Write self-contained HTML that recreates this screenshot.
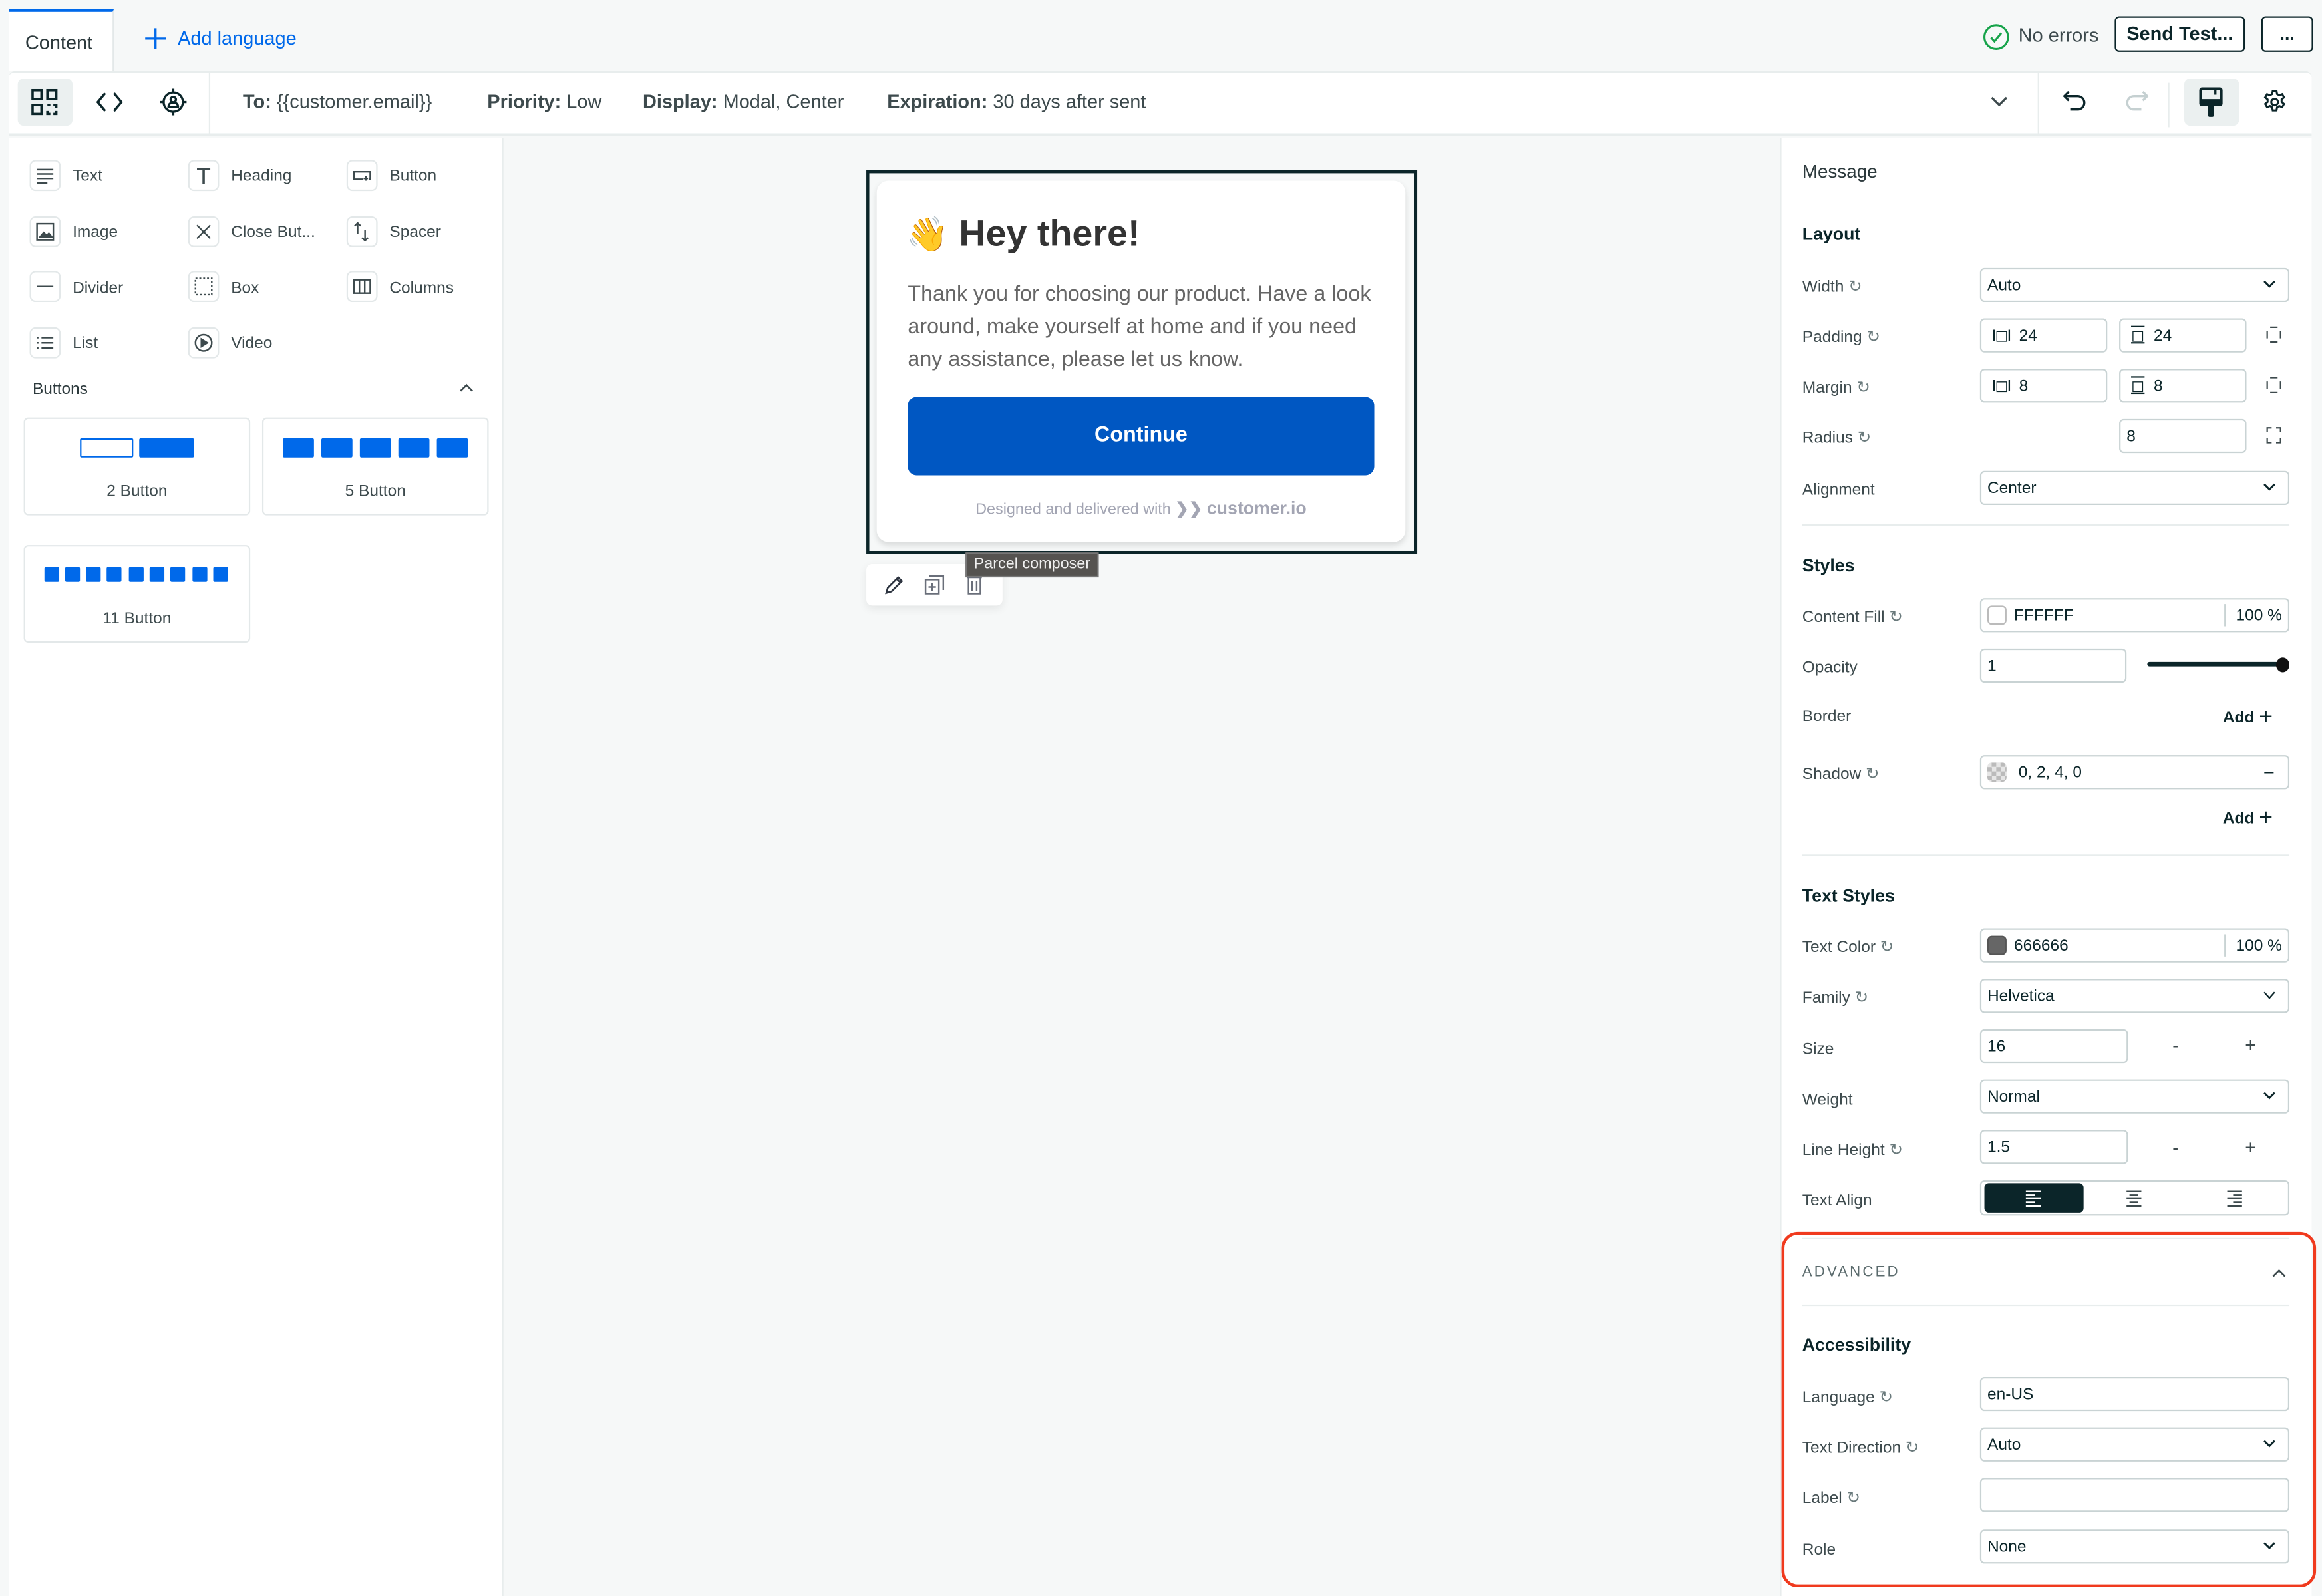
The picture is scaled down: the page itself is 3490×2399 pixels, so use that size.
<!DOCTYPE html>
<html><head><meta charset="utf-8">
<style>
*{box-sizing:border-box;margin:0;padding:0}
html,body{width:3490px;height:2398px;overflow:hidden;background:#f6f8f8}
#w{position:absolute;left:0;top:0;width:1568px;height:1078px;transform:scale(2.22577);transform-origin:0 0;font-family:"Liberation Sans",sans-serif;color:#3d4a4d;background:#f6f8f8}
.a{position:absolute}
.t{position:absolute;white-space:nowrap;line-height:16px;height:16px}
.ib{position:absolute;width:21px;height:21px;border:1px solid #e3e8e9;border-radius:4px;background:#fff}
.ib svg{position:absolute;left:2px;top:2px}
.pl{position:absolute;white-space:nowrap;line-height:16px;height:16px;font-size:11px;margin-top:1px}
.lbl{position:absolute;font-size:11px;color:#3d4a4d;white-space:nowrap;line-height:16px;margin-top:1px}
.inp{position:absolute;border:1px solid #c9d3d4;border-radius:3px;background:#fff;height:23px;font-size:11px;color:#0b2529;line-height:22px;padding-left:4px;white-space:nowrap}
.chev{position:absolute;right:8px;top:7px}
.sec{position:absolute;font-size:12.5px;font-weight:bold;color:#0b2529;line-height:16px}
.card{position:absolute;border:1px solid #e3e8e9;border-radius:3px;background:#fff}
.bb{position:absolute;background:#0069ea;border-radius:1px}
</style></head><body><div id="w">
<!-- top bar -->
<div class="a" style="left:6px;top:6px;width:71px;height:42px;background:#fff;border-top:2px solid #0069ea;border-right:1px solid #e3e8e9"></div>
<div class="t" style="left:17px;top:21px;font-size:13px;color:#2d3a3d">Content</div>
<svg class="a" style="left:98px;top:19px" width="14" height="14" viewBox="0 0 14 14"><path d="M7 0V14M0 7H14" stroke="#0069ea" stroke-width="1.5"/></svg>
<div class="t" style="left:120px;top:18px;font-size:13px;color:#0069ea">Add language</div>
<svg class="a" style="left:1339px;top:16px" width="18" height="18" viewBox="0 0 18 18"><circle cx="9" cy="9" r="8" fill="none" stroke="#16a34a" stroke-width="1.4"/><path d="M5.5 9.3l2.3 2.6 4.6-5.6" fill="none" stroke="#16a34a" stroke-width="1.4"/></svg>
<div class="t" style="left:1363px;top:16px;font-size:13px;color:#3d4a4d">No errors</div>
<div class="a" style="left:1428px;top:11px;width:88px;height:24px;border:1px solid #0b2529;border-radius:3px;background:#fff;font-size:13px;font-weight:bold;color:#0b2529;text-align:center;line-height:22px">Send Test...</div>
<div class="a" style="left:1527px;top:11px;width:35px;height:24px;border:1px solid #0b2529;border-radius:3px;background:#fff;font-size:12px;font-weight:bold;color:#0b2529;text-align:center;line-height:22px">...</div>
<!-- toolbar -->
<div class="a" style="left:6px;top:48px;width:1555px;height:44px;background:#fff;border-bottom:2px solid #e8eded;border-top:1px solid #e8eded;border-radius:4px 4px 0 0"></div>
<div class="a" style="left:12px;top:53px;width:37px;height:32px;background:#ebf0f0;border-radius:4px"></div>
<svg class="a" style="left:21px;top:60px" width="18" height="18" viewBox="0 0 18 18" fill="none" stroke="#0b2529" stroke-width="1.6"><rect x="1" y="1" width="6" height="6"/><rect x="11" y="1" width="6" height="6"/><rect x="1" y="11" width="6" height="6"/><path d="M11 11h2M15 11h2v2M17 15v2h-2M13 17h-2v-2M11 13v0" /></svg>
<svg class="a" style="left:65px;top:62px" width="18" height="14" viewBox="0 0 18 14" fill="none" stroke="#0b2529" stroke-width="1.6"><path d="M6 1L1 7l5 6M12 1l5 6-5 6"/></svg>
<svg class="a" style="left:108px;top:60px" width="18" height="18" viewBox="0 0 18 18" fill="none" stroke="#0b2529" stroke-width="1.5"><circle cx="9" cy="9" r="6.5"/><path d="M9 0v3M9 15v3M0 9h3M15 9h3"/><circle cx="9" cy="7.3" r="1.8"/><path d="M5.8 12.2c0-2 1.4-2.8 3.2-2.8s3.2.8 3.2 2.8z"/></svg>
<div class="a" style="left:141px;top:48px;width:1px;height:43px;background:#e8eded"></div>
<div class="t" style="left:164px;top:61px;font-size:13px;color:#3d4a4d"><b>To:</b> {{customer.email}}</div>
<div class="t" style="left:329px;top:61px;font-size:13px;color:#3d4a4d"><b>Priority:</b> Low</div>
<div class="t" style="left:434px;top:61px;font-size:13px;color:#3d4a4d"><b>Display:</b> Modal, Center</div>
<div class="t" style="left:599px;top:61px;font-size:13px;color:#3d4a4d"><b>Expiration:</b> 30 days after sent</div>
<svg class="a" style="left:1344px;top:65px" width="12" height="8" viewBox="0 0 12 8" fill="none" stroke="#3d4a4d" stroke-width="1.4"><path d="M1 1l5 5 5-5"/></svg>
<div class="a" style="left:1376px;top:48px;width:1px;height:43px;background:#e8eded"></div>
<svg class="a" style="left:1393px;top:61px" width="16" height="16" viewBox="0 0 16 16" fill="none" stroke="#0b2529" stroke-width="1.5"><path d="M4 1L1 4l3 3M1 4h9a4.5 4.5 0 010 9H5"/></svg>
<svg class="a" style="left:1435px;top:61px" width="16" height="16" viewBox="0 0 16 16" fill="none" stroke="#c5d0d1" stroke-width="1.5"><path d="M12 1l3 3-3 3M15 4H6a4.5 4.5 0 000 9h5"/></svg>
<div class="a" style="left:1464px;top:56px;width:1px;height:30px;background:#e8eded"></div>
<div class="a" style="left:1475px;top:53px;width:37px;height:32px;background:#ebf0f0;border-radius:4px"></div>
<svg class="a" style="left:1485px;top:59px" width="16" height="21" viewBox="0 0 16 21"><rect x="1" y="1" width="14" height="11" rx="1" fill="none" stroke="#0b2529" stroke-width="1.8"/><rect x="1" y="8" width="14" height="4" fill="#0b2529"/><path d="M11 1v4" stroke="#0b2529" stroke-width="1.5"/><rect x="6" y="12" width="4" height="8" rx="1" fill="#0b2529"/></svg>
<svg class="a" style="left:1527px;top:60px" width="18" height="18" viewBox="0 0 24 24" fill="none" stroke="#0b2529" stroke-width="1.8"><circle cx="12" cy="12" r="3"/><path d="M10.3 2h3.4l.5 2.8 2 1.1 2.6-1 1.7 2.9-2.2 1.8v2.3l2.2 1.8-1.7 2.9-2.6-1-2 1.1-.5 2.8h-3.4l-.5-2.8-2-1.1-2.6 1-1.7-2.9 2.2-1.8V9.6L3.5 7.8l1.7-2.9 2.6 1 2-1.1z"/></svg>
<!-- left panel -->
<div class="a" style="left:6px;top:93px;width:334px;height:985px;background:#fff;border-right:1px solid #e8eded"></div>
<div class="ib" style="left:20px;top:108px"><svg width="15" height="15" viewBox="0 0 15 15" stroke="#3d4a4d" stroke-width="1.1"><path d="M2 3.5h11M2 6.5h11M2 9.5h11M2 12.5h7"/></svg></div>
<div class="pl" style="left:49px;top:110px">Text</div>
<div class="ib" style="left:127px;top:108px"><svg width="15" height="15" viewBox="0 0 15 15" stroke="#3d4a4d" stroke-width="1.6" fill="none"><path d="M3 3h9M7.5 3v10"/></svg></div>
<div class="pl" style="left:156px;top:110px">Heading</div>
<div class="ib" style="left:234px;top:108px"><svg width="15" height="15" viewBox="0 0 15 15" stroke="#3d4a4d" stroke-width="1.1" fill="none"><path d="M8 10H2V5h11v5h-1M10 8v3M8.5 9.5h3"/></svg></div>
<div class="pl" style="left:263px;top:110px">Button</div>
<div class="ib" style="left:20px;top:146px"><svg width="15" height="15" viewBox="0 0 15 15" stroke="#3d4a4d" stroke-width="1.1" fill="none"><rect x="2" y="2" width="11" height="11"/><path d="M4 11l2.5-3 2 2 1.5-1.5L12 11z" fill="#3d4a4d"/></svg></div>
<div class="pl" style="left:49px;top:148px">Image</div>
<div class="ib" style="left:127px;top:146px"><svg width="15" height="15" viewBox="0 0 15 15" stroke="#3d4a4d" stroke-width="1.1"><path d="M3 3l9 9M12 3l-9 9"/></svg></div>
<div class="pl" style="left:156px;top:148px">Close But...</div>
<div class="ib" style="left:234px;top:146px"><svg width="15" height="15" viewBox="0 0 15 15" stroke="#3d4a4d" stroke-width="1.1" fill="none"><path d="M4.5 9V1.5M2.5 3.5l2-2 2 2M9.5 6v7.5M7.5 11.5l2 2 2-2"/></svg></div>
<div class="pl" style="left:263px;top:148px">Spacer</div>
<div class="ib" style="left:20px;top:183px"><svg width="15" height="15" viewBox="0 0 15 15" stroke="#3d4a4d" stroke-width="1.1"><path d="M2 7.5h11"/></svg></div>
<div class="pl" style="left:49px;top:186px">Divider</div>
<div class="ib" style="left:127px;top:183px"><svg width="15" height="15" viewBox="0 0 15 15" stroke="#3d4a4d" stroke-width="1.1" fill="none" stroke-dasharray="1.3 1.3"><rect x="2" y="2" width="11" height="11"/></svg></div>
<div class="pl" style="left:156px;top:186px">Box</div>
<div class="ib" style="left:234px;top:183px"><svg width="15" height="15" viewBox="0 0 15 15" stroke="#3d4a4d" stroke-width="1.1" fill="none"><rect x="2" y="3" width="11" height="9"/><path d="M5.7 3v9M9.3 3v9"/></svg></div>
<div class="pl" style="left:263px;top:186px">Columns</div>
<div class="ib" style="left:20px;top:221px"><svg width="15" height="15" viewBox="0 0 15 15" stroke="#3d4a4d" stroke-width="1.1"><path d="M5 4h8M5 7.5h8M5 11h8M2 4h1M2 7.5h1M2 11h1"/></svg></div>
<div class="pl" style="left:49px;top:223px">List</div>
<div class="ib" style="left:127px;top:221px"><svg width="15" height="15" viewBox="0 0 15 15" stroke="#3d4a4d" stroke-width="1.1" fill="none"><circle cx="7.5" cy="7.5" r="5.5"/><path d="M6 5v5l4-2.5z" fill="#3d4a4d"/></svg></div>
<div class="pl" style="left:156px;top:223px">Video</div>
<div class="pl" style="left:22px;top:254px;color:#2d3a3d">Buttons</div>
<svg class="a" style="left:310px;top:258px" width="10" height="7" viewBox="0 0 10 7" fill="none" stroke="#3d4a4d" stroke-width="1.2"><path d="M1 6l4-4 4 4"/></svg>
<div class="card" style="left:16px;top:282px;width:153px;height:66px"></div>
<div class="a" style="left:54px;top:296px;width:36px;height:13px;border:1px solid #0069ea;border-radius:1px;background:#fff"></div>
<div class="bb" style="left:94px;top:296px;width:37px;height:13px"></div>
<div class="pl" style="left:16px;top:323px;width:153px;text-align:center">2 Button</div>
<div class="card" style="left:177px;top:282px;width:153px;height:66px"></div>
<div class="bb" style="left:191px;top:296px;width:21px;height:13px"></div>
<div class="bb" style="left:217px;top:296px;width:21px;height:13px"></div>
<div class="bb" style="left:243px;top:296px;width:21px;height:13px"></div>
<div class="bb" style="left:269px;top:296px;width:21px;height:13px"></div>
<div class="bb" style="left:295px;top:296px;width:21px;height:13px"></div>
<div class="pl" style="left:177px;top:323px;width:153px;text-align:center">5 Button</div>
<div class="card" style="left:16px;top:368px;width:153px;height:66px"></div>
<div class="bb" style="left:30px;top:383px;width:10px;height:10px"></div>
<div class="bb" style="left:44px;top:383px;width:10px;height:10px"></div>
<div class="bb" style="left:58px;top:383px;width:10px;height:10px"></div>
<div class="bb" style="left:72px;top:383px;width:10px;height:10px"></div>
<div class="bb" style="left:87px;top:383px;width:10px;height:10px"></div>
<div class="bb" style="left:101px;top:383px;width:10px;height:10px"></div>
<div class="bb" style="left:115px;top:383px;width:10px;height:10px"></div>
<div class="bb" style="left:130px;top:383px;width:10px;height:10px"></div>
<div class="bb" style="left:144px;top:383px;width:10px;height:10px"></div>
<div class="pl" style="left:16px;top:409px;width:153px;text-align:center">11 Button</div>
<!-- canvas modal -->
<div class="a" style="left:585px;top:115px;width:372px;height:259px;border:2px solid #0b2529"></div>
<div class="a" style="left:592px;top:122px;width:357px;height:244px;background:#fff;border-radius:8px;box-shadow:0 2px 4px rgba(0,0,0,.12)"></div>
<div class="t" style="left:612px;top:143px;height:30px;line-height:30px;font-size:25px;font-weight:bold;color:#333"><span style="font-family:'Noto Color Emoji','DejaVu Sans',sans-serif;font-size:23px">👋</span> Hey there!</div>
<div class="a" style="left:613px;top:188px;width:320px;font-size:14.5px;line-height:22px;color:#666">Thank you for choosing our product. Have a look around, make yourself at home and if you need any assistance, please let us know.</div>
<div class="a" style="left:613px;top:268px;width:315px;height:53px;background:#0057c2;border-radius:6px;color:#fff;font-weight:bold;font-size:14.5px;text-align:center;line-height:53px">Continue</div>
<div class="t" style="left:592px;top:335px;width:357px;text-align:center;font-size:10.5px;color:#a3a5b3">Designed and delivered with <span style="font-weight:bold;font-size:11px">❯❯</span> <b style="font-size:12px">customer.io</b></div>
<div class="a" style="left:585px;top:381px;width:92px;height:28px;background:#fff;border-radius:4px;box-shadow:0 2px 6px rgba(0,0,0,.08)"></div>
<svg class="a" style="left:597px;top:388px" width="14" height="14" viewBox="0 0 14 14" fill="none" stroke="#2d3440" stroke-width="1.2"><path d="M1.5 12.5l1-3.5 7-7 2.5 2.5-7 7zM8.5 3l2.5 2.5"/></svg>
<svg class="a" style="left:624px;top:388px" width="14" height="14" viewBox="0 0 14 14" fill="none" stroke="#6a6f7a" stroke-width="1.1"><rect x="1" y="3.5" width="9" height="9.5"/><path d="M3.5 1h9.5v9.5M5.5 6v5M3 8.5h5"/></svg>
<svg class="a" style="left:652px;top:388px" width="12" height="14" viewBox="0 0 12 14" fill="none" stroke="#6a6f7a" stroke-width="1.1"><path d="M1 2h10M2 2v11h8V2M4.5 4.5v6.5M7.5 4.5v6.5"/></svg>
<div class="a" style="left:652px;top:373px;width:90px;height:17px;background:#555350;border:1px solid #777;color:#f0f0f0;font-size:10.5px;line-height:15px;text-align:center">Parcel composer</div>
<!-- right panel -->
<div class="a" style="left:1202px;top:93px;width:359px;height:985px;background:#fff;border-left:1px solid #e8eded"></div>
<div class="t" style="left:1217px;top:108px;font-size:12.5px;color:#2d3a3d">Message</div>
<div class="sec" style="left:1217px;top:150px;font-size:12px">Layout</div>
<div class="lbl" style="left:1217px;top:185px">Width <span style="color:#6a7a7c">↻</span></div>
<div class="inp" style="left:1337px;top:181px;width:209px">Auto<svg class="chev" width="9" height="6" viewBox="0 0 9 6" fill="none" stroke="#0b2529" stroke-width="1.3"><path d="M1 1l3.5 3.5L8 1"/></svg></div>
<div class="lbl" style="left:1217px;top:219px">Padding <span style="color:#6a7a7c">↻</span></div>
<div class="inp" style="left:1337px;top:215px;width:86px">&nbsp;<span style="letter-spacing:-1px">I◻I</span>&nbsp; 24</div>
<div class="inp" style="left:1431px;top:215px;width:86px">&nbsp;<span style="text-decoration:overline underline">◻</span>&nbsp; 24</div>
<svg class="a" style="left:1530px;top:220px" width="11" height="12" viewBox="0 0 11 12" fill="none" stroke="#3d4a4d" stroke-width="1"><path d="M3 1h5M3 11h5M1 3.5v5M10 3.5v5"/></svg>
<div class="lbl" style="left:1217px;top:253px">Margin <span style="color:#6a7a7c">↻</span></div>
<div class="inp" style="left:1337px;top:249px;width:86px">&nbsp;<span style="letter-spacing:-1px">I◻I</span>&nbsp; 8</div>
<div class="inp" style="left:1431px;top:249px;width:86px">&nbsp;<span style="text-decoration:overline underline">◻</span>&nbsp; 8</div>
<svg class="a" style="left:1530px;top:254px" width="11" height="12" viewBox="0 0 11 12" fill="none" stroke="#3d4a4d" stroke-width="1"><path d="M3 1h5M3 11h5M1 3.5v5M10 3.5v5"/></svg>
<div class="lbl" style="left:1217px;top:287px">Radius <span style="color:#6a7a7c">↻</span></div>
<div class="inp" style="left:1431px;top:283px;width:86px">8</div>
<svg class="a" style="left:1530px;top:288px" width="11" height="12" viewBox="0 0 11 12" fill="none" stroke="#3d4a4d" stroke-width="1"><path d="M1 4V1h3M7 1h3v3M10 8v3H7M4 11H1V8"/></svg>
<div class="lbl" style="left:1217px;top:322px">Alignment</div>
<div class="inp" style="left:1337px;top:318px;width:209px">Center<svg class="chev" width="9" height="6" viewBox="0 0 9 6" fill="none" stroke="#0b2529" stroke-width="1.3"><path d="M1 1l3.5 3.5L8 1"/></svg></div>
<div class="a" style="left:1217px;top:354px;width:329px;height:1px;background:#e8eded"></div>
<div class="sec" style="left:1217px;top:374px;font-size:12px">Styles</div>
<div class="lbl" style="left:1217px;top:408px">Content Fill <span style="color:#6a7a7c">↻</span></div>
<div class="inp" style="left:1337px;top:404px;width:209px;padding-left:22px">FFFFFF<div class="a" style="left:4px;top:4px;width:13px;height:13px;border:1px solid #bbb;border-radius:3px"></div><div class="a" style="left:164px;top:3px;width:1px;height:15px;background:#c9d3d4"></div><span class="a" style="right:4px;top:0">100 %</span></div>
<div class="lbl" style="left:1217px;top:442px">Opacity</div>
<div class="inp" style="left:1337px;top:438px;width:99px">1</div>
<div class="a" style="left:1450px;top:447px;width:92px;height:3px;background:#0b2529;border-radius:2px"></div>
<div class="a" style="left:1537px;top:444px;width:9px;height:10px;background:#111;border-radius:50%"></div>
<div class="lbl" style="left:1217px;top:475px">Border</div>
<div class="t" style="left:1501px;top:476px;font-size:11px;font-weight:bold;color:#0b2529">Add <span style="font-weight:normal;font-size:16px;position:relative;top:1px">+</span></div>
<div class="lbl" style="left:1217px;top:514px">Shadow <span style="color:#6a7a7c">↻</span></div>
<div class="inp" style="left:1337px;top:510px;width:209px;padding-left:25px">0, 2, 4, 0<div class="a" style="left:4px;top:4px;width:13px;height:13px;border-radius:3px;background:repeating-conic-gradient(#bbb 0 25%,#e6e6e6 0 50%) 0 0/6px 6px"></div><span class="a" style="right:9px;top:0;font-size:13px">−</span></div>
<div class="t" style="left:1501px;top:544px;font-size:11px;font-weight:bold;color:#0b2529">Add <span style="font-weight:normal;font-size:16px;position:relative;top:1px">+</span></div>
<div class="a" style="left:1217px;top:577px;width:329px;height:1px;background:#e8eded"></div>
<div class="sec" style="left:1217px;top:597px;font-size:12px">Text Styles</div>
<div class="lbl" style="left:1217px;top:631px">Text Color <span style="color:#6a7a7c">↻</span></div>
<div class="inp" style="left:1337px;top:627px;width:209px;padding-left:22px">666666<div class="a" style="left:4px;top:4px;width:13px;height:13px;border:1px solid #555;border-radius:3px;background:#666"></div><div class="a" style="left:164px;top:3px;width:1px;height:15px;background:#c9d3d4"></div><span class="a" style="right:4px;top:0">100 %</span></div>
<div class="lbl" style="left:1217px;top:665px">Family <span style="color:#6a7a7c">↻</span></div>
<div class="inp" style="left:1337px;top:661px;width:209px">Helvetica<svg class="chev" width="9" height="6" viewBox="0 0 9 6" fill="none" stroke="#0b2529" stroke-width="1"><path d="M1 1l3.5 4L8 1"/></svg></div>
<div class="lbl" style="left:1217px;top:700px">Size</div>
<div class="inp" style="left:1337px;top:695px;width:100px">16</div>
<div class="t" style="left:1467px;top:698px;font-size:12px">-</div>
<div class="t" style="left:1516px;top:698px;font-size:13px">+</div>
<div class="lbl" style="left:1217px;top:734px">Weight</div>
<div class="inp" style="left:1337px;top:729px;width:209px">Normal<svg class="chev" width="9" height="6" viewBox="0 0 9 6" fill="none" stroke="#0b2529" stroke-width="1.3"><path d="M1 1l3.5 3.5L8 1"/></svg></div>
<div class="lbl" style="left:1217px;top:768px">Line Height <span style="color:#6a7a7c">↻</span></div>
<div class="inp" style="left:1337px;top:763px;width:100px">1.5</div>
<div class="t" style="left:1467px;top:767px;font-size:12px">-</div>
<div class="t" style="left:1516px;top:767px;font-size:13px">+</div>
<div class="lbl" style="left:1217px;top:802px">Text Align</div>
<div class="inp" style="left:1337px;top:797px;width:209px;height:24px"></div>
<div class="a" style="left:1340px;top:799px;width:67px;height:20px;background:#0b2529;border-radius:3px"></div>
<svg class="a" style="left:1367px;top:803px" width="12" height="12" viewBox="0 0 12 12" stroke="#fff" stroke-width="1"><path d="M1 1.5h10M1 4h6M1 6.5h10M1 9h6M1 11.5h10"/></svg>
<svg class="a" style="left:1435px;top:803px" width="12" height="12" viewBox="0 0 12 12" stroke="#3d4a4d" stroke-width="1"><path d="M1 1.5h10M3 4h6M1 6.5h10M3 9h6M1 11.5h10"/></svg>
<svg class="a" style="left:1503px;top:803px" width="12" height="12" viewBox="0 0 12 12" stroke="#3d4a4d" stroke-width="1"><path d="M1 1.5h10M5 4h6M1 6.5h10M5 9h6M1 11.5h10"/></svg>
<!-- advanced -->
<div class="a" style="left:1203px;top:832px;width:361px;height:240px;border:2px solid #f03a1e;border-radius:11px"></div>
<div class="a" style="left:1217px;top:836px;width:329px;height:1px;background:#e8eded"></div>
<div class="t" style="left:1217px;top:852px;font-size:10px;letter-spacing:1.4px;color:#5a6a6c">ADVANCED</div>
<svg class="a" style="left:1534px;top:856px" width="10" height="7" viewBox="0 0 10 7" fill="none" stroke="#3d4a4d" stroke-width="1.2"><path d="M1 6l4-4 4 4"/></svg>
<div class="a" style="left:1217px;top:881px;width:329px;height:1px;background:#e8eded"></div>
<div class="sec" style="left:1217px;top:900px;font-size:12px">Accessibility</div>
<div class="lbl" style="left:1217px;top:935px">Language <span style="color:#6a7a7c">↻</span></div>
<div class="inp" style="left:1337px;top:930px;width:209px">en-US</div>
<div class="lbl" style="left:1217px;top:969px">Text Direction <span style="color:#6a7a7c">↻</span></div>
<div class="inp" style="left:1337px;top:964px;width:209px">Auto<svg class="chev" width="9" height="6" viewBox="0 0 9 6" fill="none" stroke="#0b2529" stroke-width="1.3"><path d="M1 1l3.5 3.5L8 1"/></svg></div>
<div class="lbl" style="left:1217px;top:1003px">Label <span style="color:#6a7a7c">↻</span></div>
<div class="inp" style="left:1337px;top:998px;width:209px"></div>
<div class="lbl" style="left:1217px;top:1038px">Role</div>
<div class="inp" style="left:1337px;top:1033px;width:209px">None<svg class="chev" width="9" height="6" viewBox="0 0 9 6" fill="none" stroke="#0b2529" stroke-width="1.3"><path d="M1 1l3.5 3.5L8 1"/></svg></div>
</div></body></html>
